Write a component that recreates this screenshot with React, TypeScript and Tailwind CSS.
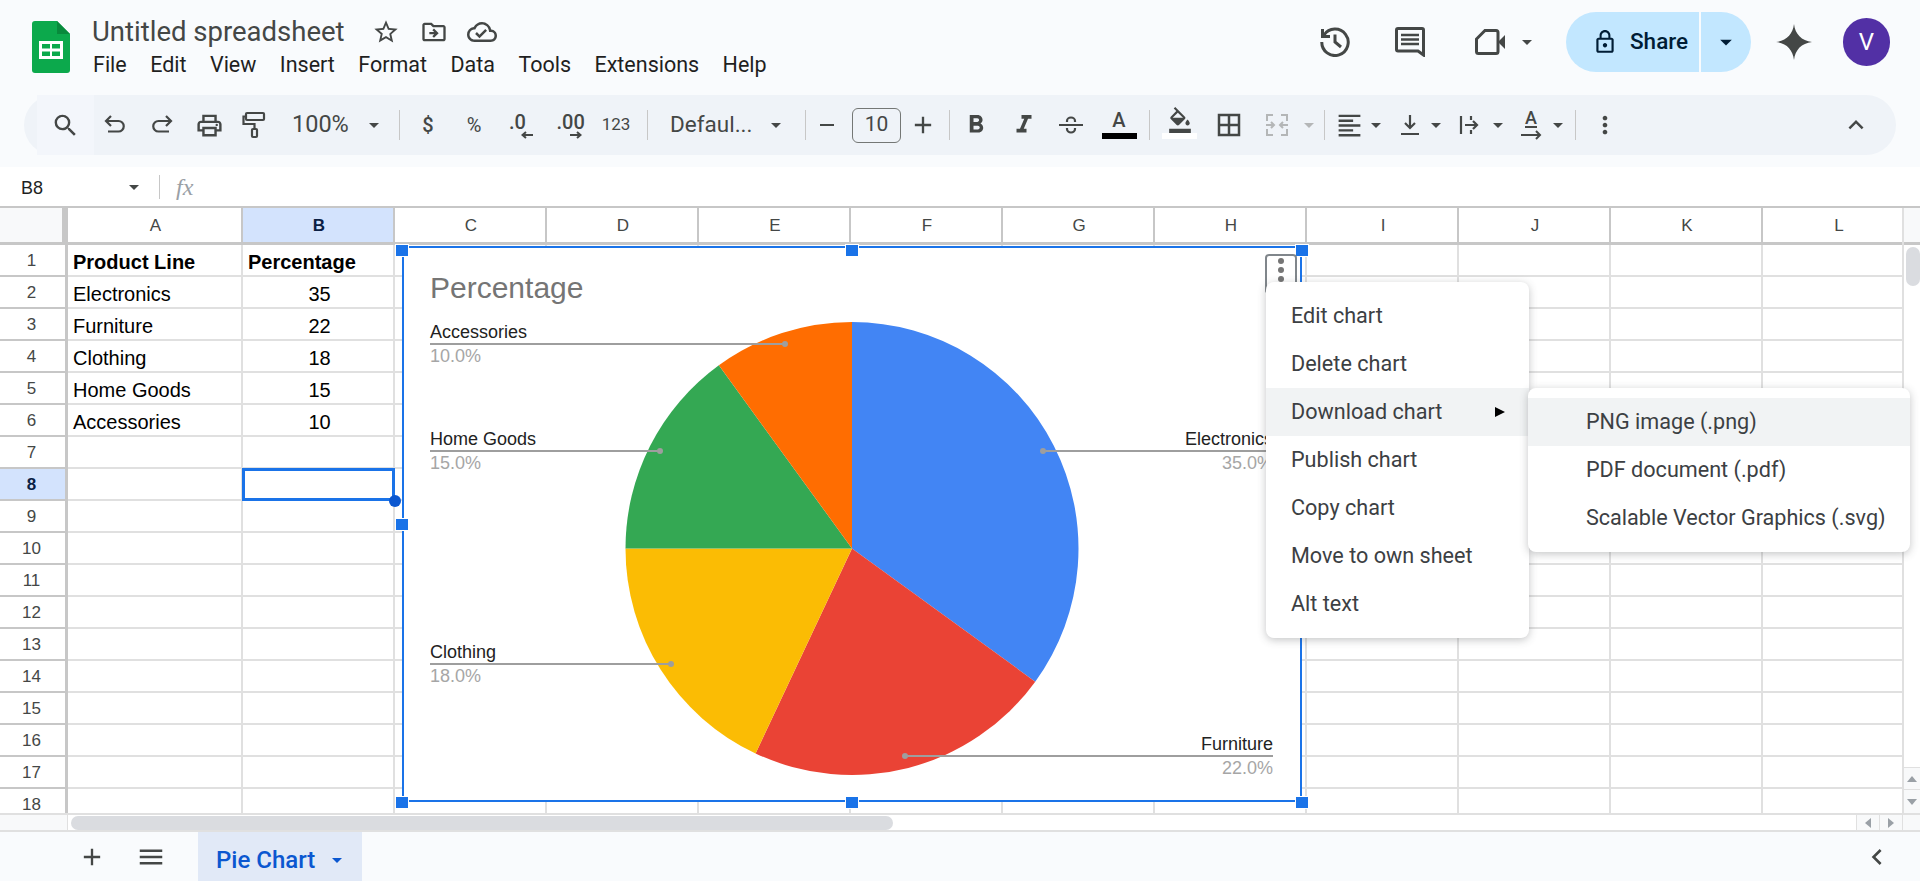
import React from 'react';
import {
  MdSearch, MdOutlineLocalPrintshop, MdArrowDropDown, MdFormatBold, MdFormatItalic, MdOutlineBorderAll,
  MdFormatAlignLeft, MdMoreVert, MdExpandLess, MdAdd, MdMenu, MdChevronLeft, MdLockOutline, MdStarBorder,
  MdOutlineDriveFileMove, MdOutlineCloudDone, MdRemove, MdOutlineFormatColorFill,
} from 'react-icons/md';

const COLS = ['C', 'D', 'E', 'F', 'G', 'H', 'I', 'J', 'K', 'L'];
const ROWS = Array.from({ length: 18 }, (_, i) => i + 1);
const DATA: Record<number, [string, string]> = {
  1: ['Product Line', 'Percentage'],
  2: ['Electronics', '35'],
  3: ['Furniture', '22'],
  4: ['Clothing', '18'],
  5: ['Home Goods', '15'],
  6: ['Accessories', '10'],
};

const SLICES = [
  { value: 35, color: '#4285f4' },
  { value: 22, color: '#ea4335' },
  { value: 18, color: '#fbbc04' },
  { value: 15, color: '#34a853' },
  { value: 10, color: '#ff6d01' },
];

function slicePath(start: number, end: number) {
  const cx = 852, cy = 548.5, r = 226.5;
  const a0 = (start / 100) * Math.PI * 2;
  const a1 = (end / 100) * Math.PI * 2;
  const x0 = cx + r * Math.sin(a0), y0 = cy - r * Math.cos(a0);
  const x1 = cx + r * Math.sin(a1), y1 = cy - r * Math.cos(a1);
  return `M${cx} ${cy}L${x0} ${y0}A${r} ${r} 0 ${end - start > 50 ? 1 : 0} 1 ${x1} ${y1}Z`;
}

function Tool({ className, children }: { className: string; children?: React.ReactNode }) {
  return <div className={`flex items-center justify-center h-full shrink-0 ${className}`}>{children}</div>;
}

function Sep({ className }: { className: string }) {
  return (
    <div className={`flex items-center justify-center h-full shrink-0 ${className}`}>
      <div className="w-px h-[30px] bg-[#c7c7c7]" />
    </div>
  );
}

function Caret({ className = 'text-[#444746]' }: { className?: string }) {
  return <MdArrowDropDown size={24} className={`shrink-0 ${className}`} />;
}

// stroked toolbar glyph, 24 box
function Glyph({ d, color = '#444746', w = 2.2, size = 24 }: { d: string; color?: string; w?: number; size?: number }) {
  return (
    <svg width={size} height={size} viewBox="0 0 24 24" fill="none" stroke={color} strokeWidth={w}>
      <path d={d} />
    </svg>
  );
}

function Label({ x, y, name, pct, lineTo, anchor = 'start' }: { x: number; y: number; name: string; pct: string; lineTo: number; anchor?: 'start' | 'end' }) {
  return (
    <g fontFamily="'Liberation Sans', sans-serif" fontSize="18" textAnchor={anchor}>
      <text x={x} y={y} fill="#222222">{name}</text>
      <line x1={x} x2={lineTo} y1={y + 6} y2={y + 6} stroke="#9e9e9e" strokeWidth="2" />
      <circle cx={lineTo} cy={y + 6} r="3" fill="#9e9e9e" />
      <text x={x} y={y + 24} fill="#a6a6a6">{pct}</text>
    </g>
  );
}

function MenuItem({ label, active, arrow }: { label: string; active?: boolean; arrow?: boolean }) {
  return (
    <div className={`flex items-center justify-between h-12 pl-[25px] pr-[24px] ${active ? 'bg-[#f1f3f4]' : ''}`}>
      <span>{label}</span>
      {arrow && <span className="w-0 h-0 border-y-[5px] border-y-transparent border-l-[10px] border-l-black" />}
    </div>
  );
}

export default function App() {
  return (
    <div className="relative w-[1920px] h-[881px] overflow-hidden flex flex-col bg-[#f9fbfd] font-['Roboto',sans-serif] text-[#1f1f1f]">
      {/* title bar */}
      <header className="flex justify-between h-[95px] shrink-0">
        <div className="flex pl-[32px] pt-[21px]">
          <svg width="38" height="52" viewBox="0 0 38 52">
            <path d="M3 0H25L38 13V49a3 3 0 0 1-3 3H3a3 3 0 0 1-3-3V3a3 3 0 0 1 3-3Z" fill="#0ca94c" />
            <path d="M25 0L38 13H25Z" fill="#088a3c" />
            <path d="M7 20H31V38H7Z" fill="#fff" />
            <path d="M10 23H18V27.5H10ZM20 23H28V27.5H20ZM10 30.5H18V35H10ZM20 30.5H28V35H20Z" fill="#0ca94c" />
          </svg>
          <div className="ml-[22px] -mt-[5px]">
            <div className="flex items-center h-[32px]">
              <span className="text-[27.5px] text-[#444746]">Untitled spreadsheet</span>
              <MdStarBorder size={28} className="ml-[27px] text-[#444746]" />
              <MdOutlineDriveFileMove size={28} className="ml-[20px] text-[#444746]" />
              <MdOutlineCloudDone size={30} className="ml-[19px] text-[#444746]" />
            </div>
            <nav className="flex gap-[23.4px] text-[21.5px] mt-[4px] h-[26px] items-center pl-px">
              {['File', 'Edit', 'View', 'Insert', 'Format', 'Data', 'Tools', 'Extensions', 'Help'].map((m) => (
                <span key={m}>{m}</span>
              ))}
            </nav>
          </div>
        </div>
        <div className="flex items-center h-[84px] pr-[30px] text-[#444746]">
          <svg width="30" height="30" viewBox="0 0 30 30" fill="none" stroke="#444746" strokeWidth="3">
            <path d="M4 8A13.2 13.2 0 1 1 1.8 15M2.5 2V9.5H10M15 7.5V15L21 20" />
          </svg>
          <svg width="30" height="30" viewBox="0 0 30 30" fill="none" stroke="#444746" className="ml-[45px]">
            <path d="M3 1.5H27Q28.5 1.5 28.5 3V28L23 24H3Q1.5 24 1.5 22.5V3Q1.5 1.5 3 1.5Z" strokeWidth="3" />
            <path d="M6 8H24M6 12.5H24M6 17H24" strokeWidth="2.5" />
          </svg>
          <svg width="30" height="26" viewBox="0 0 30 26" fill="none" stroke="#444746" strokeWidth="3" className="ml-[50px]">
            <path d="M10 1.5H21Q23 1.5 23 3.5V22.5Q23 24.5 21 24.5H3.5Q1.5 24.5 1.5 22.5V10Z" />
            <path d="M23 13L30 6V20Z" fill="#444746" stroke="none" />
          </svg>
          <Caret className="ml-[10px] text-[#444746]" />
          <div className="flex items-center h-[60px] w-[185px] ml-[27px] rounded-full bg-[#c2e7ff] text-[#001d35]">
            <div className="flex items-center h-full w-[135px] pl-[26px] border-r-2 border-[#f9fbfd]">
              <MdLockOutline size={26} />
              <span className="ml-[12px] text-[22.5px] font-medium">Share</span>
            </div>
            <MdArrowDropDown size={28} className="ml-[11px]" />
          </div>
          <svg width="36" height="36" viewBox="0 0 24 24" className="ml-[25px]">
            <path d="M12 0C12.8 6.8 17 11.2 24 12C17 12.8 12.8 17.2 12 24C11.2 17.2 7 12.8 0 12C7 11.2 11.2 6.8 12 0Z" fill="#444746" />
          </svg>
          <div className="flex items-center justify-center w-[47px] h-[48px] ml-[31px] rounded-full bg-[#5230a5] text-white text-[24px]">V</div>
        </div>
      </header>

      {/* toolbar */}
      <div className="flex items-center h-[60px] mx-[24px] pl-[13px] pr-[18px] rounded-[30px] bg-[#eff3f8] text-[#444746] shrink-0">
        <Tool className="w-[57px] bg-[#f3f6fb]"><MdSearch size={29} /></Tool>
        <Tool className="w-[42px]"><Glyph d="M8 3L3 8L8 13M3 8H15.5A5 5 0 0 1 15.5 18.5H5" /></Tool>
        <Tool className="w-[52px]"><Glyph d="M16 3L21 8L16 13M21 8H8.5A5 5 0 0 0 8.5 18.5H19" /></Tool>
        <Tool className="w-[42px]"><MdOutlineLocalPrintshop size={29} /></Tool>
        <Tool className="w-[48px]">
          <svg width="24" height="28" viewBox="0 0 24 28" fill="none" stroke="#444746" strokeWidth="2.2">
            <rect x="4" y="2" width="18" height="7" rx="1" />
            <path d="M4 5.5H1.5V13H12.5V18" />
            <rect x="10" y="18" width="5" height="8" rx="1" />
          </svg>
        </Tool>
        <Tool className="w-[112px] pl-[14px] !justify-between pr-[4px] text-[23.5px]"><span>100%</span><Caret /></Tool>
        <Sep className="w-[18px]" />
        <Tool className="w-[40px] text-[20px] font-medium">$</Tool>
        <Tool className="w-[52px] text-[20px]">%</Tool>
        <Tool className="w-[42px]">
          <div className="flex flex-col w-[24px] -mb-[3px]">
            <span className="text-[20px] leading-[17px] font-medium self-start">.0</span>
            <svg width="12" height="8" viewBox="0 0 12 8" fill="none" stroke="#444746" strokeWidth="2" className="self-end">
              <path d="M12 4H1.5M5 1L1.5 4L5 7" />
            </svg>
          </div>
        </Tool>
        <Tool className="w-[54px]">
          <div className="flex flex-col w-[25px] -mb-[3px]">
            <span className="text-[20px] leading-[17px] font-medium self-start">.00</span>
            <svg width="12" height="8" viewBox="0 0 12 8" fill="none" stroke="#444746" strokeWidth="2" className="self-end">
              <path d="M0 4H10.5M7 1L10.5 4L7 7" />
            </svg>
          </div>
        </Tool>
        <Tool className="w-[40px] text-[17px]">123</Tool>
        <Sep className="w-[22px]" />
        <Tool className="w-[137px] pl-[12px] !justify-between pr-[7px] text-[22.5px]"><span>Defaul...</span><Caret /></Tool>
        <Sep className="w-[20px]" />
        <Tool className="w-[24px]"><MdRemove size={24} /></Tool>
        <div className="flex items-center justify-center ml-[13px] w-[49px] h-[35px] rounded-[6px] border border-[#747775] text-[21px] shrink-0">10</div>
        <Tool className="w-[44px]"><MdAdd size={28} /></Tool>
        <Sep className="w-[8px]" />
        <Tool className="w-[46px]"><MdFormatBold size={30} /></Tool>
        <Tool className="w-[50px]"><MdFormatItalic size={30} /></Tool>
        <Tool className="w-[44px]"><Glyph d="M0 12H24M8 9V8A4 3.5 0 0 1 16 8V9M8 15V16A4 3.5 0 0 0 16 16V15" /></Tool>
        <Tool className="w-[52px] flex-col !justify-end pb-[16px]">
          <span className="text-[20px] leading-[20px] font-medium">A</span>
          <span className="w-[35px] h-[6px] mt-[3px] bg-black" />
        </Tool>
        <Sep className="w-[8px]" />
        <Tool className="w-[52px] flex-col !justify-end pb-[16px]">
          <MdOutlineFormatColorFill size={26} className="ml-[2px]" />
          <span className="w-[35px] h-[6px] bg-white" />
        </Tool>
        <Tool className="w-[48px]"><MdOutlineBorderAll size={30} /></Tool>
        <Tool className="w-[48px]"><Glyph color="#b4b6b7" d="M8 2H2V8M2 16V22H8M16 2H22V8M22 16V22H16M1 12H9M6 9L9 12L6 15M23 12H15M18 9L15 12L18 15" w={2} /></Tool>
        <Tool className="w-[16px]"><Caret className="text-[#b4b6b7]" /></Tool>
        <Sep className="w-[14px]" />
        <Tool className="w-[36px]"><MdFormatAlignLeft size={29} /></Tool>
        <Tool className="w-[18px]"><Caret /></Tool>
        <Tool className="w-[36px] ml-[7px]"><Glyph d="M12 2V15M7 10L12 15L17 10M3 21H21" /></Tool>
        <Tool className="w-[16px]"><Caret /></Tool>
        <Tool className="w-[36px] ml-[7px]"><Glyph d="M4 3V21M14 3V7M14 17V21M8 12H20M16 8L20 12L16 16" /></Tool>
        <Tool className="w-[22px]"><Caret /></Tool>
        <Tool className="w-[36px] ml-[4px] flex-col">
          <span className="text-[18px] leading-[16px] font-medium">A</span>
          <svg width="22" height="14" viewBox="0 0 22 14" fill="none" stroke="#444746" strokeWidth="2">
            <path d="M5 1H17M1 9H20M16 5L20 9L16 13" />
          </svg>
        </Tool>
        <Tool className="w-[18px]"><Caret /></Tool>
        <Sep className="w-[16px]" />
        <Tool className="w-[44px]"><MdMoreVert size={28} /></Tool>
        <div className="flex-1" />
        <Tool className="w-[44px]"><MdExpandLess size={30} /></Tool>
      </div>
      <div className="h-[12px] shrink-0" />

      {/* formula bar */}
      <div className="flex items-center h-[41px] bg-white border-b-2 border-[#c7c7c7] shrink-0">
        <span className="w-[122px] pl-[21px] pt-[3px] text-[18px] font-['Liberation_Sans',sans-serif] text-[#1f1f1f]">B8</span>
        <MdArrowDropDown size={24} className="text-[#444746]" />
        <div className="w-px h-[24px] ml-[13px] bg-[#c7c7c7]" />
        <span className="ml-[16px] text-[24px] italic font-['Liberation_Serif',serif] text-[#9aa0a6]">fx</span>
      </div>

      {/* grid */}
      <div className="relative flex flex-1 min-h-0 bg-white font-['Liberation_Sans',sans-serif] text-[20px] text-black">
        <div className="flex-1 min-w-0 overflow-hidden">
          <div className="flex h-[34px] text-[17px] text-[#444746] border-b-[3px] border-[#c7c7c7] box-content">
            <div className="w-[68px] shrink-0 bg-[#f8f9fa] border-r-[6px] border-[#c7c7c7]" />
            <div className="flex items-center justify-center w-[175px] pt-[2px] pl-[2px] shrink-0 border-r-2 border-[#c7c7c7]">A</div>
            <div className="flex items-center justify-center w-[152px] pt-[2px] pl-[2px] shrink-0 border-r-2 border-[#c7c7c7] bg-[#d3e3fd] font-bold text-[#0b1f44]">B</div>
            {COLS.map((c) => (
              <div key={c} className="flex items-center justify-center w-[152px] pt-[2px] pl-[2px] shrink-0 border-r-2 border-[#c7c7c7]">{c}</div>
            ))}
          </div>
          {ROWS.map((r) => (
            <div key={r} className="flex h-[32px]">
              <div className={`flex items-center justify-center w-[68px] pr-[2px] pt-[1px] shrink-0 border-r-[3px] border-b-2 border-[#c7c7c7] text-[17px] ${r === 8 ? 'bg-[#d3e3fd] font-bold text-[#0b1f44]' : 'text-[#444746]'}`}>{r}</div>
              <div className={`flex items-center w-[175px] pl-[5px] pt-[3px] shrink-0 border-r-2 border-b-2 border-[#e0e0e0] ${r === 1 ? 'font-bold' : ''}`}>{DATA[r]?.[0]}</div>
              <div className={`flex items-center w-[152px] pl-[5px] pt-[3px] shrink-0 border-r-2 border-b-2 border-[#e0e0e0] ${r === 1 ? 'font-bold' : 'justify-center pr-[2px]'}`}>{DATA[r]?.[1]}</div>
              {COLS.map((c) => (
                <div key={c} className="w-[152px] shrink-0 border-r-2 border-b-2 border-[#e0e0e0]" />
              ))}
            </div>
          ))}
        </div>

        {/* vertical scrollbar */}
        <div className="flex flex-col w-[18px] shrink-0 border-l-2 border-[#e0e0e0]">
          <div className="h-[37px] border-b-[3px] border-[#c7c7c7] bg-[#f8f9fa]" />
          <div className="w-[14px] h-[39px] mt-[2px] ml-[2px] rounded-full bg-[#dadce0]" />
          <div className="flex-1" />
          <div className="flex items-center justify-center h-[23px] bg-[#f8f9fa] border-y border-[#e0e0e0]">
            <span className="w-0 h-0 border-x-[5px] border-x-transparent border-b-[6px] border-b-[#9aa0a6]" />
          </div>
          <div className="flex items-center justify-center h-[23px] bg-[#f8f9fa]">
            <span className="w-0 h-0 border-x-[5px] border-x-transparent border-t-[6px] border-t-[#9aa0a6]" />
          </div>
        </div>

        {/* selected cell */}
        <div className="absolute left-[242px] top-[260px] w-[153px] h-[33px] border-[3px] border-[#1a73e8]" />
        <div className="absolute left-[389px] top-[287px] w-3 h-3 rounded-full bg-[#0b57d0]" />

        {/* chart */}
        <div className="absolute left-[402px] top-[38px] w-[900px] h-[556px] bg-white border-2 border-[#1a73e8]" />
        <svg className="absolute left-[402px] top-[38px]" width="900" height="556" viewBox="402 246 900 556">
          {SLICES.map((s, i) => {
            const start = SLICES.slice(0, i).reduce((t, x) => t + x.value, 0);
            return <path key={s.color} d={slicePath(start, start + s.value)} fill={s.color} />;
          })}
          <text x="430" y="298" fontFamily="'Liberation Sans', sans-serif" fontSize="30" fill="#757575">Percentage</text>
          <Label x={430} y={338} name="Accessories" pct="10.0%" lineTo={785} />
          <Label x={430} y={445} name="Home Goods" pct="15.0%" lineTo={660} />
          <Label x={430} y={658} name="Clothing" pct="18.0%" lineTo={671} />
          <Label x={1273} y={445} name="Electronics" pct="35.0%" lineTo={1043} anchor="end" />
          <Label x={1273} y={750} name="Furniture" pct="22.0%" lineTo={905} anchor="end" />
        </svg>
        {[
          'left-[396px] top-[37px]', 'left-[846px] top-[37px]', 'left-[1296px] top-[37px]',
          'left-[396px] top-[311px]', 'left-[396px] top-[589px]', 'left-[846px] top-[589px]', 'left-[1296px] top-[589px]',
        ].map((p) => (
          <div key={p} className={`absolute w-[12px] h-[11px] bg-[#1a73e8] outline outline-white ${p}`} />
        ))}
        <div className="absolute left-[1265px] top-[46px] w-[32px] h-[40px] rounded-[4px] border-2 border-[#80868b] bg-white flex flex-col items-center pt-[2px] gap-[3px]">
          {[0, 1, 2].map((d) => <span key={d} className="w-[6px] h-[6px] rounded-full bg-[#757575]" />)}
        </div>
      </div>

      {/* horizontal scrollbar */}
      <div className="flex h-[19px] border-y-2 border-[#e0e0e0] bg-white shrink-0 box-border">
        <div className="w-[68px] bg-[#f8f9fa] border-r border-[#e0e0e0]" />
        <div className="w-[822px] h-[14px] ml-[3px] mt-[1px] rounded-full bg-[#dadce0]" />
        <div className="flex-1" />
        <div className="flex items-center justify-center w-[24px] bg-[#f8f9fa] border-x border-[#e0e0e0]">
          <span className="w-0 h-0 border-y-[5px] border-y-transparent border-r-[6px] border-r-[#9aa0a6]" />
        </div>
        <div className="flex items-center justify-center w-[23px] bg-[#f8f9fa] border-r border-[#e0e0e0]">
          <span className="w-0 h-0 border-y-[5px] border-y-transparent border-l-[6px] border-l-[#9aa0a6]" />
        </div>
        <div className="w-[17px] bg-[#f8f9fa]" />
      </div>

      {/* sheet tabs */}
      <div className="flex items-center h-[49px] text-[#444746] shrink-0">
        <MdAdd size={28} className="ml-[78px]" />
        <MdMenu size={30} className="ml-[30px]" />
        <div className="flex items-center h-full w-[164px] ml-[32px] pl-[18px] pt-[6px] bg-[#e1e9f7] text-[#0b57d0] text-[24px] font-medium">
          Pie Chart
          <MdArrowDropDown size={24} className="ml-[10px]" />
        </div>
        <div className="flex-1" />
        <MdChevronLeft size={32} className="mr-[27px]" />
      </div>

      {/* context menus */}
      <div className="absolute left-[1266px] top-[282px] w-[263px] py-[10px] rounded-[8px] bg-white text-[21.6px] text-[#3c4043] shadow-[0_2px_8px_rgba(60,64,67,0.3)]">
        <MenuItem label="Edit chart" />
        <MenuItem label="Delete chart" />
        <MenuItem label="Download chart" active arrow />
        <MenuItem label="Publish chart" />
        <MenuItem label="Copy chart" />
        <MenuItem label="Move to own sheet" />
        <MenuItem label="Alt text" />
      </div>
      <div className="absolute left-[1528px] top-[388px] w-[382px] py-[10px] rounded-[8px] bg-white text-[21.6px] text-[#3c4043] shadow-[0_2px_8px_rgba(60,64,67,0.3)]">
        <div className="flex items-center h-12 pl-[58px] bg-[#f1f3f4]">PNG image (.png)</div>
        <div className="flex items-center h-12 pl-[58px]">PDF document (.pdf)</div>
        <div className="flex items-center h-12 pl-[58px]">Scalable Vector Graphics (.svg)</div>
      </div>
    </div>
  );
}
